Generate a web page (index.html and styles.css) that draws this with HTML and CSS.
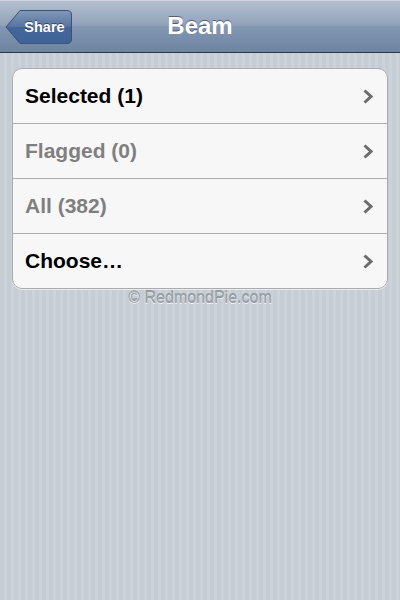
FILE: index.html
```html
<!DOCTYPE html>
<html lang="en">

<head>
    <meta charset="UTF-8">
    <meta name="viewport" content="width=device-width, initial-scale=1.0">
    <link rel="stylesheet" href="styles.css">
    <title>Beam</title>
</head>

<body>
    <div class="navbar">
        <a class="back-btn" href="#">
            <svg class="back-shape" width="68" height="36" viewBox="0 0 68 36">
                <defs>
                    <linearGradient id="btnGrad" x1="0" y1="0" x2="0" y2="1">
                        <stop offset="0" stop-color="#8299b8" />
                        <stop offset="0.5" stop-color="#5574a0" />
                        <stop offset="0.5" stop-color="#44679a" />
                        <stop offset="1" stop-color="#3f6298" />
                    </linearGradient>
                </defs>
                <path d="M1 18 L15 1.5 L62 1.5 Q66.5 1.5 66.5 6 L66.5 30 Q66.5 34.5 62 34.5 L15 34.5 Z"
                    fill="url(#btnGrad)" stroke="#3b5378" stroke-width="1" />
            </svg>
            <span class="back-label">Share</span>
        </a>
        <h1 class="title">Beam</h1>
    </div>

    <div class="content">
        <ul class="table">
            <li class="row">
                <span class="label">Selected (1)</span>
                <svg class="chevron" width="10" height="15" viewBox="0 0 10 15"><path d="M1.5 1.5 L8 7.5 L1.5 13.5" fill="none" stroke="#6c6c6c" stroke-width="3" /></svg>
            </li>
            <li class="row dim">
                <span class="label">Flagged (0)</span>
                <svg class="chevron" width="10" height="15" viewBox="0 0 10 15"><path d="M1.5 1.5 L8 7.5 L1.5 13.5" fill="none" stroke="#6c6c6c" stroke-width="3" /></svg>
            </li>
            <li class="row dim">
                <span class="label">All (382)</span>
                <svg class="chevron" width="10" height="15" viewBox="0 0 10 15"><path d="M1.5 1.5 L8 7.5 L1.5 13.5" fill="none" stroke="#6c6c6c" stroke-width="3" /></svg>
            </li>
            <li class="row">
                <span class="label">Choose…</span>
                <svg class="chevron" width="10" height="15" viewBox="0 0 10 15"><path d="M1.5 1.5 L8 7.5 L1.5 13.5" fill="none" stroke="#6c6c6c" stroke-width="3" /></svg>
            </li>
        </ul>
        <p class="watermark">© RedmondPie.com</p>
    </div>
</body>

</html>
```

FILE: styles.css
```css
/* General */
body {
    margin: 0;
    width: 400px;
    height: 600px;
    overflow: hidden;
    font-family: "Liberation Sans", Arial, sans-serif;
    background-color: #c5ccd4;
    background-image: repeating-linear-gradient(90deg, #c5ccd4 0, #c5ccd4 4px, #cbd2d9 4px, #cbd2d9 7px);
}

/* Nav bar */
.navbar {
    height: 53px;
    display: flex;
    align-items: center;
    justify-content: center;
    position: relative;
    background: linear-gradient(to bottom, #b4c0cf 0%, #8d9fb8 50%, #8397b2 50%, #6d84a2 100%);
    border-top: 1px solid #cdd5df;
    border-bottom: 1px solid #2d3642;
    box-sizing: border-box;
}

.title {
    margin: 0 0 2px;
    color: #fff;
    font-size: 24px;
    font-weight: bold;
    text-shadow: 0 -1px 0 rgba(0, 0, 0, 0.45);
}

.back-btn {
    position: absolute;
    left: 5px;
    top: 8px;
    width: 68px;
    height: 36px;
    text-decoration: none;
}

.back-shape {
    position: absolute;
    left: 0;
    top: 0;
}

.back-label {
    position: absolute;
    left: 13px;
    right: 2px;
    top: 0;
    height: 36px;
    line-height: 36px;
    text-align: center;
    color: #fff;
    font-size: 14.5px;
    font-weight: bold;
    text-shadow: 0 -1px 0 rgba(0, 0, 0, 0.45);
}

/* Table */
.content {
    padding: 15px 12px 0;
}

.table {
    list-style: none;
    margin: 0;
    padding: 0;
    background: #f7f7f7;
    border: 1px solid #a9abae;
    border-radius: 10px;
    box-shadow: 0 1px 0 rgba(255, 255, 255, 0.6);
    overflow: hidden;
}

.row {
    height: 54px;
    display: flex;
    align-items: center;
    justify-content: space-between;
    padding: 0 14px 0 12px;
    border-bottom: 1px solid #abadb0;
}

.row:last-child {
    border-bottom: none;
}

.label {
    font-size: 21px;
    font-weight: bold;
    color: #000;
}

.dim .label {
    color: #7f7f7f;
}

.chevron {
    display: block;
}

.watermark {
    margin: 0;
    padding-top: 0;
    text-align: center;
    font-size: 16px;
    color: #9a9fa6;
    text-shadow: 0 1px 0 rgba(255, 255, 255, 0.8), 0 -1px 0 rgba(0, 0, 0, 0.25);
}
```
